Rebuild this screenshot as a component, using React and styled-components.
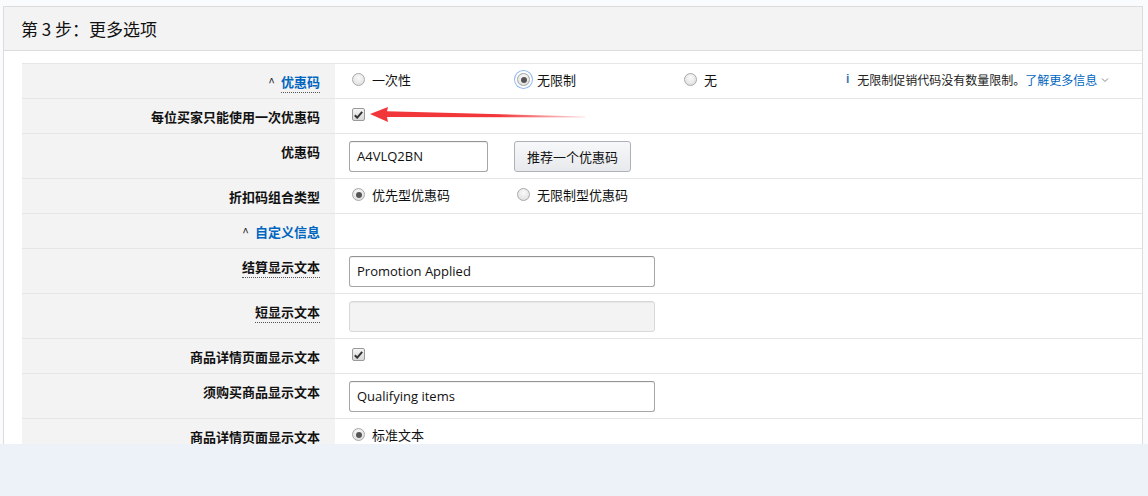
import React from "react";
import styled, { createGlobalStyle, css } from "styled-components";

const GlobalStyle = createGlobalStyle`
  html, body {
    margin: 0;
    padding: 0;
    background: #edf1f8;
  }
  body {
    font-family: "Open Sans", "Noto Sans CJK SC", sans-serif;
    font-size: 13px;
    color: #111;
  }
`;

const Page = styled.div`
  height: 444px;
  padding: 6px 5px 0 3px;
  box-sizing: border-box;
  background: #fafbfd;
  overflow: hidden;
`;

const Panel = styled.div`
  height: 100%;
  border: 1px solid #dcdcdc;
  border-bottom: none;
  background: #fff;
  box-sizing: border-box;
`;

const Header = styled.div`
  height: 43px;
  line-height: 43px;
  padding-left: 17px;
  background: #f3f3f3;
  border-bottom: 1px solid #dcdcdc;
  font-size: 17px;
  color: #111;
  font-family: "Noto Sans CJK SC", sans-serif;
`;

const Body = styled.div`
  padding: 12px 0 0 18px;
`;

const Table = styled.div`
  border-top: 1px solid #e6e6e6;
`;

const Row = styled.div`
  display: grid;
  grid-template-columns: 313px 1fr;
  border-bottom: 1px solid #e6e6e6;
`;

const Label = styled.div`
  background: #f3f3f3;
  text-align: right;
  padding: 8px 15px 7px;
  line-height: 19px;
  font-weight: 700;
  font-family: "Noto Sans CJK SC", sans-serif;
  color: #111;
`;

const Dotted = styled.span`
  border-bottom: 1px dotted #555;
  padding-bottom: 1px;
`;

const Toggle = styled.span`
  font-weight: 400;
  font-size: 12px;
  margin-right: 6px;
  color: #222;
`;

const LinkLabel = styled.span`
  color: #0066c0;
  ${(p) =>
    p.$dotted &&
    css`
      border-bottom: 1px dotted #555;
      padding-bottom: 1px;
    `}
`;

const Cell = styled.div`
  position: relative;
  display: flex;
  align-items: ${(p) => (p.$field ? "flex-start" : "center")};
  padding: ${(p) => (p.$field ? "7px 14px 6px" : "6px 14px 9px")};
  height: ${(p) => (p.$field ? 31 : 19)}px;
  line-height: 19px;
  font-family: "Noto Sans CJK SC", sans-serif;
`;

const Option = styled.label`
  display: flex;
  align-items: center;
  width: ${(p) => p.$w || 165}px;
  flex: none;
`;

const Radio = styled.span`
  box-sizing: border-box;
  width: 13px;
  height: 13px;
  margin: 0 7px 0 3px;
  border-radius: 50%;
  border: 1px solid #a9a9a9;
  background: radial-gradient(circle at 50% 35%, #fafafa 0%, #e4e4e4 70%, #d6d6d6 100%);
  position: relative;
  flex: none;
  ${(p) =>
    p.$checked &&
    css`
      &::after {
        content: "";
        position: absolute;
        left: 2.5px;
        top: 2.5px;
        width: 6px;
        height: 6px;
        border-radius: 50%;
        background: #555;
      }
    `}
  ${(p) =>
    p.$focus &&
    css`
      box-shadow: 0 0 0 2px #fff, 0 0 0 3px #8fb8ee;
    `}
`;

const Check = styled.span`
  box-sizing: border-box;
  display: inline-flex;
  align-items: center;
  justify-content: center;
  width: 13px;
  height: 13px;
  margin-left: 3px;
  border: 1px solid #9a9a9a;
  border-radius: 2px;
  background: linear-gradient(#f4f4f4, #d8d8d8);
`;

const Input = styled.div`
  box-sizing: border-box;
  width: ${(p) => p.$w}px;
  height: 31px;
  line-height: 29px;
  padding: 0 7px;
  border: 1px solid #a6a6a6;
  border-top-color: #949494;
  border-radius: 3px;
  background: ${(p) => (p.$disabled ? "#f3f3f3" : "#fff")};
  ${(p) => p.$disabled && css`border-color: #d8d8d8;`}
  box-shadow: inset 0 1px 0 rgba(0, 0, 0, 0.05);
  font-family: "Open Sans", sans-serif;
  font-size: 13px;
  color: #111;
`;

const Button = styled.div`
  box-sizing: border-box;
  height: 31px;
  line-height: 29px;
  margin-left: 26px;
  padding: 0 12px;
  border: 1px solid #adb1b8;
  border-radius: 3px;
  background: linear-gradient(#f7f8fa, #e7e9ec);
  font-size: 13px;
  color: #111;
`;

const Info = styled.div`
  display: flex;
  align-items: center;
  font-size: 12px;
  color: #222;
`;

const InfoIcon = styled.span`
  font-family: "Liberation Sans", sans-serif;
  font-weight: 700;
  color: #3d78b0;
  margin-right: 8px;
`;

const InfoLink = styled.span`
  color: #0066c0;
`;

const Caret = styled.span`
  margin-left: 4px;
  display: inline-flex;
`;

const Arrow = styled.svg`
  position: absolute;
  left: 35px;
  top: 7px;
`;

const CheckMark = () => (
  <svg width="9" height="8" viewBox="0 0 9 8">
    <path d="M0.8 4.2 L3.2 6.6 L8.2 0.9" fill="none" stroke="#333" strokeWidth="2" />
  </svg>
);

const App = () => (
  <>
    <GlobalStyle />
    <Page>
      <Panel>
        <Header>第 3 步：更多选项</Header>
        <Body>
          <Table>
            <Row>
              <Label>
                <Toggle>^</Toggle>
                <LinkLabel $dotted>优惠码</LinkLabel>
              </Label>
              <Cell>
                <Option>
                  <Radio />
                  一次性
                </Option>
                <Option $w={167}>
                  <Radio $checked $focus />
                  无限制
                </Option>
                <Option>
                  <Radio />无
                </Option>
                <Info>
                  <InfoIcon>i</InfoIcon>
                  无限制促销代码没有数量限制。
                  <InfoLink>了解更多信息</InfoLink>
                  <Caret>
                    <svg width="8" height="6" viewBox="0 0 8 6">
                      <path d="M1 1.5 L4 4.5 L7 1.5" fill="none" stroke="#888" strokeWidth="1" />
                    </svg>
                  </Caret>
                </Info>
              </Cell>
            </Row>
            <Row>
              <Label>每位买家只能使用一次优惠码</Label>
              <Cell>
                <Check>
                  <CheckMark />
                </Check>
                <Arrow width="216" height="17" viewBox="0 0 216 17">
                  <defs>
                    <linearGradient id="arrowFade" x1="0" x2="1" y1="0" y2="0">
                      <stop offset="0" stopColor="#f2373a" />
                      <stop offset="0.6" stopColor="#f2373a" />
                      <stop offset="1" stopColor="#f2373a" stopOpacity="0.15" />
                    </linearGradient>
                  </defs>
                  <polygon
                    points="0,8 18,1 17,5.2 215,10.6 215,11.4 17,11 18,16"
                    fill="url(#arrowFade)"
                  />
                </Arrow>
              </Cell>
            </Row>
            <Row>
              <Label>优惠码</Label>
              <Cell $field>
                <Input $w={139}>A4VLQ2BN</Input>
                <Button>推荐一个优惠码</Button>
              </Cell>
            </Row>
            <Row>
              <Label>折扣码组合类型</Label>
              <Cell>
                <Option>
                  <Radio $checked />
                  优先型优惠码
                </Option>
                <Option>
                  <Radio />
                  无限制型优惠码
                </Option>
              </Cell>
            </Row>
            <Row>
              <Label>
                <Toggle>^</Toggle>
                <LinkLabel>自定义信息</LinkLabel>
              </Label>
              <Cell />
            </Row>
            <Row>
              <Label>
                <Dotted>结算显示文本</Dotted>
              </Label>
              <Cell $field>
                <Input $w={306}>Promotion Applied</Input>
              </Cell>
            </Row>
            <Row>
              <Label>
                <Dotted>短显示文本</Dotted>
              </Label>
              <Cell $field>
                <Input $w={306} $disabled />
              </Cell>
            </Row>
            <Row>
              <Label>商品详情页面显示文本</Label>
              <Cell>
                <Check>
                  <CheckMark />
                </Check>
              </Cell>
            </Row>
            <Row>
              <Label>须购买商品显示文本</Label>
              <Cell $field>
                <Input $w={306}>Qualifying items</Input>
              </Cell>
            </Row>
            <Row>
              <Label>商品详情页面显示文本</Label>
              <Cell>
                <Option>
                  <Radio $checked />
                  标准文本
                </Option>
              </Cell>
            </Row>
          </Table>
        </Body>
      </Panel>
    </Page>
  </>
);

export default App;
